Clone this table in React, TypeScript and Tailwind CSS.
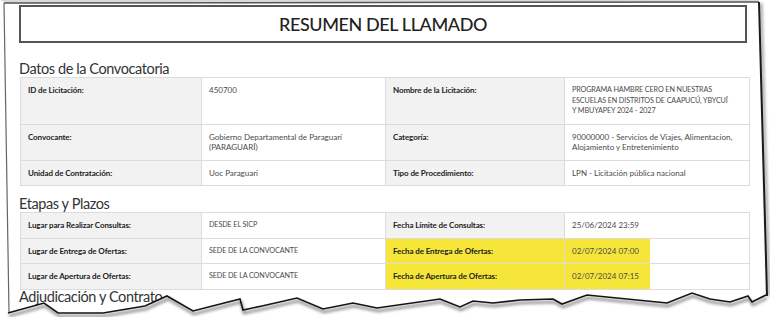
import React from 'react';

type Cell = { text: React.ReactNode; hl?: 'full' | 'part'; caps?: boolean };
type Row = [Cell, Cell, Cell, Cell];

const datos: Row[] = [
  [
    { text: 'ID de Licitación:' },
    { text: '450700' },
    { text: 'Nombre de la Licitación:' },
    {
      caps: true,
      text: (
        <>
          PROGRAMA HAMBRE CERO EN NUESTRAS
          <br />
          ESCUELAS EN DISTRITOS DE CAAPUCÚ, YBYCUÍ
          <br />Y MBUYAPEY 2024 - 2027
        </>
      ),
    },
  ],
  [
    { text: 'Convocante:' },
    {
      text: (
        <>
          Gobierno Departamental de Paraguarí
          <br />
          (PARAGUARÍ)
        </>
      ),
    },
    { text: 'Categoría:' },
    {
      text: (
        <>
          90000000 - Servicios de Viajes, Alimentacion,
          <br />
          Alojamiento y Entretenimiento
        </>
      ),
    },
  ],
  [
    { text: 'Unidad de Contratación:' },
    { text: 'Uoc Paraguari' },
    { text: 'Tipo de Procedimiento:' },
    { text: 'LPN - Licitación pública nacional' },
  ],
];

const etapas: Row[] = [
  [
    { text: 'Lugar para Realizar Consultas:' },
    { text: 'DESDE EL SICP', caps: true },
    { text: 'Fecha Límite de Consultas:' },
    { text: '25/06/2024 23:59' },
  ],
  [
    { text: 'Lugar de Entrega de Ofertas:' },
    { text: 'SEDE DE LA CONVOCANTE', caps: true },
    { text: 'Fecha de Entrega de Ofertas:', hl: 'full' },
    { text: '02/07/2024 07:00', hl: 'part' },
  ],
  [
    { text: 'Lugar de Apertura de Ofertas:' },
    { text: 'SEDE DE LA CONVOCANTE', caps: true },
    { text: 'Fecha de Apertura de Ofertas:', hl: 'full' },
    { text: '02/07/2024 07:15', hl: 'part' },
  ],
];

const InfoTable: React.FC<{ rows: Row[] }> = ({ rows }) => (
  <div className="ml-[1px] w-[730px] border border-[#dcdcdc] grid grid-cols-[181px_184px_179px_184px]">
    {rows.map((row, ri) =>
      row.map((cell, ci) => {
        const isLabel = ci % 2 === 0;
        const last = ri === rows.length - 1;
        let bg = isLabel ? 'bg-[#f2f2f2]' : 'bg-white';
        if (cell.hl === 'full') bg = 'bg-[#f7e63a]';
        if (cell.hl === 'part') bg = 'bg-[linear-gradient(to_right,#f7e63a_85px,#ffffff_85px)]';
        const tone = isLabel
          ? 'text-[8px] font-bold text-[#222] tracking-[-0.1px]'
          : cell.caps
            ? 'text-[7.2px] text-[#4a4a4a] tracking-[-0.1px]'
            : 'text-[8px] text-[#4a4a4a]';
        return (
          <div
            key={`${ri}-${ci}`}
            className={`px-[7px] py-[7px] leading-[10.5px] whitespace-nowrap ${bg} ${ci < 3 ? 'border-r border-[#dcdcdc]' : ''} ${last ? '' : 'border-b border-[#dcdcdc]'} ${tone}`}
          >
            {cell.text}
          </div>
        );
      })
    )}
  </div>
);

const Heading: React.FC<{ children: React.ReactNode; className?: string }> = ({ children, className }) => (
  <h2 className={`text-[14.5px] leading-[16px] text-[#333] tracking-[-0.4px] ${className ?? ''}`}>{children}</h2>
);

const torn = [
  [8, 313], [44, 303], [58, 313], [103, 313], [145, 306], [167, 296], [193, 311],
  [240, 299], [243, 310], [262, 306], [297, 298], [323, 309], [353, 303], [377, 308], [440, 299],
  [460, 307], [473, 301], [493, 303], [520, 300], [553, 299], [562, 304], [587, 295], [667, 303],
  [692, 293], [710, 299], [730, 302], [748, 296], [752, 302], [766, 295],
];

const PaperFrame = () => {
  const line = torn.map(([x, y]) => `${x},${y}`).join(' ');
  return (
    <svg className="absolute inset-0" width="770" height="317" viewBox="0 0 770 317">
      <defs>
        <filter id="soft" x="-10%" y="-10%" width="120%" height="130%">
          <feGaussianBlur stdDeviation="1.6" />
        </filter>
      </defs>
      {/* outside of the sheet */}
      <polygon points="0,0 770,0 770,2 0,3" fill="#d9d9d9" />
      <polygon points={`${line} 770,295 770,317 0,317 0,313`} fill="#ffffff" />
      <polygon points="759,0 770,0 770,296 767,296" fill="#ffffff" />
      <polygon points="0,0 4,2 9,313 0,317" fill="#ffffff" />
      {/* shadows */}
      <polyline points={torn.map(([x, y]) => `${x + 1},${y + 3}`).join(' ')} fill="none" stroke="#8a8a8a" strokeWidth="2.5" filter="url(#soft)" />
      <line x1="761" y1="3" x2="769" y2="296" stroke="#9a9a9a" strokeWidth="2.5" filter="url(#soft)" />
      {/* edges */}
      <line x1="4" y1="3" x2="759" y2="2" stroke="#555" strokeWidth="1.5" />
      <line x1="4" y1="3" x2="9" y2="313" stroke="#666" strokeWidth="1.2" />
      <line x1="759" y1="2" x2="767" y2="296" stroke="#1a1a1a" strokeWidth="2" />
      <polyline points={line} fill="none" stroke="#151515" strokeWidth="1.6" strokeLinejoin="miter" />
    </svg>
  );
};

export default function App() {
  return (
    <div className="relative w-[770px] h-[317px] overflow-hidden bg-white font-['Lato','Noto_Sans',sans-serif]">
      <div className="pl-[19px] pt-[5px]">
        <div className="w-[728px] h-[38px] border-2 border-[#555] flex items-center justify-center">
          <h1 className="text-[18px] font-medium text-[#222] tracking-[-0.4px]">RESUMEN DEL LLAMADO</h1>
        </div>
        <Heading className="mt-[18px]">Datos de la Convocatoria</Heading>
        <InfoTable rows={datos} />
        <Heading className="mt-[10px]">Etapas y Plazos</Heading>
        <InfoTable rows={etapas} />
        <Heading className="-mt-[1px]">Adjudicación y Contrato</Heading>
      </div>
      <PaperFrame />
    </div>
  );
}
